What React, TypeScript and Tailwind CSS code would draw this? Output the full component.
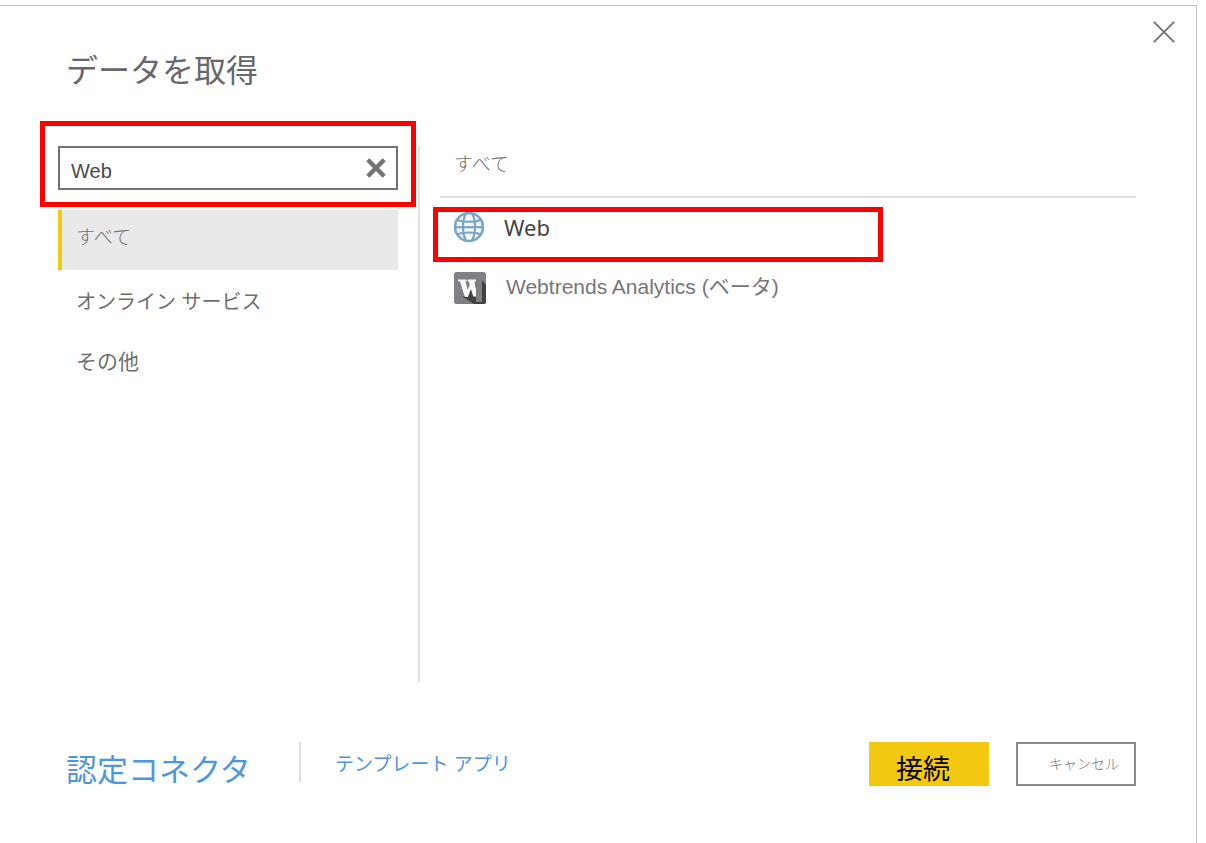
import { useState } from "react";

const categories = [
  { label: "すべて", style: "text-[19px] font-light pb-1" },
  { label: "オンライン サービス", style: "text-[20px] pt-1" },
  { label: "その他", style: "text-[21px] pt-1" },
];

function CloseIcon() {
  return (
    <svg width="22" height="22" viewBox="0 0 22 22" fill="none" stroke="#767676" strokeWidth="1.9" aria-hidden="true">
      <path d="M0.8 0.8 L21.2 21.2 M21.2 0.8 L0.8 21.2" />
    </svg>
  );
}

function ClearIcon() {
  return (
    <svg width="20" height="20" viewBox="0 0 20 20" fill="none" stroke="#737373" strokeWidth="4.4" aria-hidden="true">
      <path d="M1.8 1.8 L18.2 18.2 M18.2 1.8 L1.8 18.2" />
    </svg>
  );
}

function GlobeIcon() {
  return (
    <svg width="32" height="32" viewBox="0 0 32 32" fill="none" stroke="#7aa3ca" strokeWidth="2" aria-hidden="true">
      <circle cx="15" cy="15" r="14" fill="#f3f8fc" strokeWidth="2.6" />
      <path d="M1 15.2 H29" strokeWidth="2.2" />
      <path d="M4 8 C7 9.6 10 9.8 15 9.8 C20 9.8 23 9.6 26 8 M4 22.2 C7 20.6 10 20.4 15 20.4 C20 20.4 23 20.6 26 22.2" />
      <path d="M12 1.5 C8 8 8 22 12 28.5 M18 1.5 C22 8 22 22 18 28.5" strokeWidth="2.2" />
    </svg>
  );
}

function WebtrendsIcon() {
  return (
    <svg width="32" height="32" viewBox="0 0 32 32" aria-hidden="true">
      <defs>
        <clipPath id="tile">
          <rect width="32" height="32" rx="2.5" />
        </clipPath>
      </defs>
      <g clipPath="url(#tile)">
        <rect width="32" height="32" fill="#808084" />
        <path d="M27 7 L32 13 V32 H20 L9 25 Z" fill="#414144" />
        <path
          d="M4 7.5 H12.5 V9.5 H11.4 L13.8 18 L15.8 12.5 L14.8 9.5 H13.6 V7.5 H22 V9.5 H20.4 L22 17 V24.5 H19.2 L16.9 17 L14 25 H10.8 L6 9.5 H4 Z"
          fill="#f7f7f7"
        />
        <rect x="22" y="6" width="6" height="24" fill="#808084" />
      </g>
    </svg>
  );
}

export default function App() {
  const [query, setQuery] = useState("Web");
  const [active, setActive] = useState(0);

  return (
    <div className="flex min-h-screen bg-white pt-[5px] pr-[9px] font-['Liberation_Sans','Noto_Sans_CJK_JP',sans-serif] text-[#6f6f6f]">
      <div
        role="dialog"
        aria-labelledby="dialog-title"
        className="flex w-full flex-col border-t border-r border-[#c4c4c4] pr-[60px] pb-[57px] pl-[58px]"
      >
        <header className="flex h-[140px] items-start justify-between">
          <h1 id="dialog-title" className="px-2 pt-10 text-[32px] leading-[50px] text-[#69676c]">
            データを取得
          </h1>
          <button type="button" aria-label="閉じる" className="-mr-[39px] pt-[15px]">
            <CloseIcon />
          </button>
        </header>

        <main className="flex flex-1 gap-5">
          <aside className="flex w-[340px] shrink-0 flex-col gap-5">
            <div className="relative">
              <div className="flex h-11 items-center border-2 border-[#737373] bg-white pr-2.5 pl-[11px]">
                <input
                  aria-label="検索"
                  value={query}
                  onChange={(e) => setQuery(e.target.value)}
                  className="min-w-0 flex-1 pt-1.5 text-xl text-[#4a4a4d] outline-none"
                />
                <button type="button" aria-label="クリア" onClick={() => setQuery("")}>
                  <ClearIcon />
                </button>
              </div>
              <div className="pointer-events-none absolute -inset-x-[18px] -top-[25px] -bottom-[17px] border-[5px] border-[#ff0000]" />
            </div>
            <nav aria-label="カテゴリ" className="flex flex-col">
              {categories.map((c, i) => (
                <button
                  key={c.label}
                  type="button"
                  onClick={() => setActive(i)}
                  className={`flex h-[60px] items-center border-l-4 pl-[14px] text-left ${c.style} ${
                    i === active ? "border-[#f2c811] bg-[#e9e9e9]" : "border-transparent"
                  }`}
                >
                  {c.label}
                </button>
              ))}
            </nav>
          </aside>

          <section className="flex min-w-0 flex-1 gap-5">
            <div className="w-0.5 shrink-0 bg-[#e0e0e0]" />
            <div className="min-w-0 flex-1">
              <h2 className="flex h-[52px] items-center border-b-2 border-[#e0e0e0] px-[14px] pb-3 text-[19px] font-light">
                すべて
              </h2>
              <ul>
                <li className="relative">
                  <button type="button" className="flex h-[60px] w-full items-center gap-[18px] pl-[14px] text-left">
                    <GlobeIcon />
                    <span className="pb-0.5 font-['Noto_Sans',sans-serif] text-[22px] leading-8 text-[#444444]">Web</span>
                  </button>
                  <div className="pointer-events-none absolute top-[9px] -left-[7px] h-[55px] w-[450px] border-[5px] border-[#ff0000]" />
                </li>
                <li>
                  <button type="button" className="flex h-[60px] w-full items-center gap-5 pl-[14px] text-left">
                    <WebtrendsIcon />
                    <span className="pb-0.5 text-[21px] text-[#77757a]">Webtrends Analytics (ベータ)</span>
                  </button>
                </li>
              </ul>
            </div>
          </section>
        </main>

        <footer className="mt-[60px] flex h-11 items-start">
          <a href="#certified" className="w-[241px] pt-1 pl-2 text-[31px] leading-[50px] text-[#4f97dc]">
            認定コネクタ
          </a>
          <div className="h-10 w-0.5 bg-[#e0e0e0]" />
          <a href="#apps" className="pl-[34px] text-[19px] leading-[46px] text-[#4f97dc]">
            テンプレート アプリ
          </a>
          <div className="ml-auto flex gap-[27px]">
            <button type="button" className="h-11 w-[120px] bg-[#f2c811] pt-3 pr-3 text-[27px] leading-[32px] text-black">
              接続
            </button>
            <button
              type="button"
              className="h-11 w-[120px] border-2 border-[#8a8a8a] pl-4 text-sm font-light text-[#767676]"
            >
              キャンセル
            </button>
          </div>
        </footer>
      </div>
    </div>
  );
}
